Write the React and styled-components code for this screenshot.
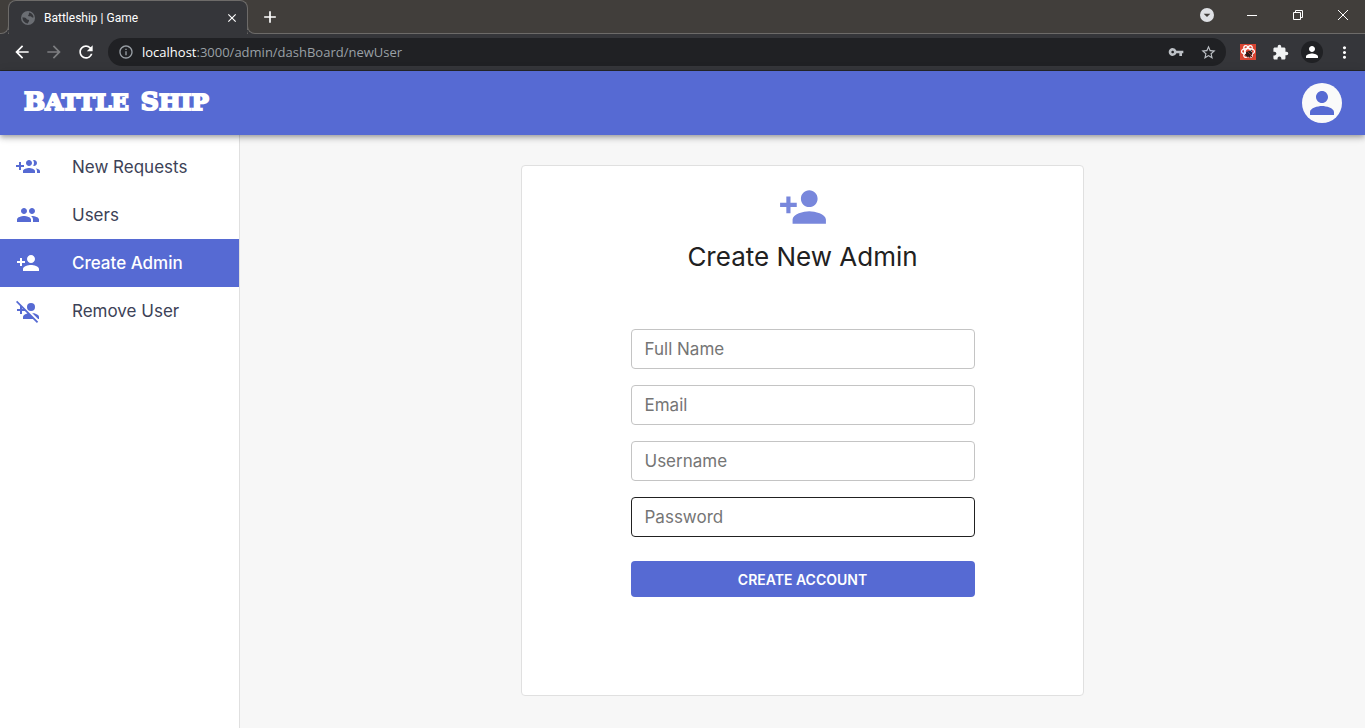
import React from "react";
import styled, { createGlobalStyle, css } from "styled-components";
import {
  MdPeople,
  MdPersonAdd,
  MdPersonAddDisabled,
  MdArrowBack,
  MdArrowForward,
  MdRefresh,
  MdInfoOutline,
  MdVpnKey,
  MdStarBorder,
  MdExtension,
  MdPerson,
  MdMoreVert,
  MdClose,
  MdAdd,
  MdArrowDropDown,
} from "react-icons/md";

const primary = "#566ad3";
const appFont = 'Inter, "Liberation Sans", sans-serif';
const chromeFont = '"Open Sans", "Noto Sans", sans-serif';

const GlobalStyle = createGlobalStyle`
  *, *::before, *::after { box-sizing: border-box; }
  body { margin: 0; background: #f7f7f7; font-family: ${appFont}; }
  svg { display: block; flex: none; }
`;

const Page = styled.div`
  min-height: 100vh;
  display: flex;
  flex-direction: column;
`;

const TitleBar = styled.div`
  height: 34px;
  display: flex;
  align-items: stretch;
  padding-left: 8px;
  background: #413e3b;
  box-shadow: inset 0 -1px #6d6b69;
`;

const Tab = styled.div`
  position: relative;
  width: 240px;
  display: flex;
  align-items: center;
  gap: 8px;
  padding: 0 7px 0 11px;
  background: #35363a;
  border: 1px solid #6d6b69;
  border-bottom: 0;
  border-radius: 8px 8px 0 0;
  color: #fff;
  font: 12px Roboto, sans-serif;

  &::before,
  &::after {
    content: "";
    position: absolute;
    bottom: 0;
    width: 8px;
    height: 8px;
    border: 1px solid #6d6b69;
    border-top: 0;
    background: #413e3b;
    box-shadow: 0 4px #35363a;
    clip-path: inset(0);
  }
  &::before {
    left: -8px;
    border-left: 0;
    border-radius: 0 0 8px 0;
  }
  &::after {
    right: -8px;
    border-right: 0;
    border-radius: 0 0 0 8px;
  }
`;

const TabTitle = styled.span`
  flex: 1;
`;

const PlainButton = styled.button`
  display: flex;
  align-items: center;
  justify-content: center;
  padding: 0;
  border: 0;
  background: none;
  color: ${(p) => p.$color || "#fff"};
  width: ${(p) => p.$width || 32}px;
  cursor: pointer;
`;

const WindowControls = styled.div`
  display: flex;
  height: 29px;
  margin-left: auto;
`;

const SearchTabs = styled.span`
  display: flex;
  align-items: center;
  justify-content: center;
  width: 14px;
  height: 14px;
  border-radius: 50%;
  background: #dfe1e5;
  color: #413e3b;
`;

const Toolbar = styled.div`
  height: 37px;
  display: flex;
  align-items: center;
  padding: 0 5px 0 6px;
  background: #35363a;
  border-bottom: 1px solid #26272a;
`;

const AddressBar = styled.div`
  flex: 1;
  height: 28px;
  display: flex;
  align-items: center;
  margin: 0 6px;
  padding: 0 2px 0 10px;
  border-radius: 14px;
  background: #202124;
  color: #9aa0a6;
`;

const Url = styled.div`
  flex: 1;
  padding-left: 8px;
  font: 13px ${chromeFont};
  strong {
    color: #fff;
    font-weight: 400;
  }
`;

const ProfileDot = styled.span`
  display: flex;
  align-items: center;
  justify-content: center;
  width: 22px;
  height: 22px;
  border-radius: 50%;
  background: #202124;
`;

const Header = styled.header`
  position: relative;
  height: 64px;
  display: flex;
  align-items: center;
  justify-content: space-between;
  padding: 0 23px 0 24px;
  background: ${primary};
  box-shadow: 0 2px 4px -1px rgba(0, 0, 0, 0.2), 0 4px 5px rgba(0, 0, 0, 0.14),
    0 1px 10px rgba(0, 0, 0, 0.12);
`;

const Logo = styled.a`
  display: flex;
  gap: 12px;
  font: bold 23px "DejaVu Serif", serif;
  line-height: 28px;
  padding-bottom: 2px;
  text-transform: uppercase;
  -webkit-text-stroke: 2px #fff;
  color: #fff;
  text-decoration: none;
`;

const LogoWord = styled.span`
  display: block;
  &::first-letter {
    font-size: 25px;
  }
`;

const Avatar = styled.button`
  width: 40px;
  height: 40px;
  display: flex;
  align-items: center;
  justify-content: center;
  padding: 0;
  border: 0;
  border-radius: 50%;
  background: #fafafa;
  color: ${primary};
  cursor: pointer;
`;

const Body = styled.div`
  flex: 1;
  display: flex;
`;

const Sidebar = styled.nav`
  flex: 0 0 240px;
  padding-top: 8px;
  background: #fff;
  border-right: 1px solid #e0e0e0;
`;

const NavItem = styled.a`
  display: flex;
  align-items: center;
  gap: 32px;
  height: 48px;
  padding: 0 16px;
  color: #3c4257;
  font-size: 17px;
  text-decoration: none;
  svg {
    color: ${primary};
  }
  ${(p) =>
    p.$active &&
    css`
      background: ${primary};
      color: #fff;
      font-weight: 500;
      svg {
        color: #fff;
      }
    `}
`;

const Main = styled.main`
  flex: 1;
  padding: 30px 0 32px;
`;

const Card = styled.section`
  width: 50%;
  margin: 0 auto;
  padding: 16px 24px 98px;
  display: flex;
  flex-direction: column;
  align-items: center;
  background: #fff;
  border: 1px solid #e0e0e0;
  border-radius: 4px;
`;

const CardIcon = styled(MdPersonAdd)`
  color: #7887dc;
`;

const Heading = styled.h1`
  margin: 8px 0 56px;
  color: #212121;
  font-size: 26px;
  font-weight: 400;
  line-height: 33px;
`;

const Form = styled.form`
  width: 100%;
  max-width: 344px;
  display: flex;
  flex-direction: column;
  gap: 16px;
`;

const Field = styled.input`
  width: 100%;
  height: 40px;
  padding: 0 13px;
  border: 1px solid ${(p) => (p.$hovered ? "#212121" : "#c4c4c4")};
  border-radius: 4px;
  background: #fff;
  color: #212121;
  font: 17px ${appFont};
  &::placeholder {
    color: #757575;
    opacity: 1;
  }
`;

const Submit = styled.button`
  height: 36px;
  margin-top: 8px;
  border: 0;
  border-radius: 4px;
  background: ${primary};
  color: #fff;
  font: 600 14px ${appFont};
  text-transform: uppercase;
  cursor: pointer;
`;

const RestoreIcon = () => (
  <svg width="12" height="12" viewBox="0 0 12 12" fill="none" stroke="#fff">
    <path d="M1.5 3.5h7v7h-7zM3.5 3.5v-2h7v7h-2" />
  </svg>
);

const MinimizeIcon = () => (
  <svg width="10" height="10" viewBox="0 0 10 10" stroke="#fff">
    <path d="M0 5.5h10" />
  </svg>
);

const CloseIcon = () => (
  <svg width="12" height="12" viewBox="0 0 12 12" stroke="#fff">
    <path d="M1 1l10 10M11 1L1 11" />
  </svg>
);

const GlobeIcon = () => (
  <svg width="16" height="16" viewBox="0 0 16 16">
    <circle cx="8" cy="8" r="7" fill="#6b6e73" />
    <path
      fill="#35363a"
      d="M9 2.5c2.4.4 4.300 2.200 4.600 4.800-.8.5-1.500.2-2-.4-.6-.7-1.800-.3-2.800-.6-.9-.3-.8-1.200-.2-1.600.7-.4.2-1.200.4-2.200zM2.500 7.300c1.200.3 2.500.2 3.400.8.800.6.500 1.300 1.400 1.500 1 .2 1.900.3 1.800 1.200-.1 1-.9 1.100-1.200 2.700-3-.1-5.600-2.800-5.400-6.200z"
    />
  </svg>
);

const GroupAddIcon = ({ size }) => (
  <svg width={size} height={size} viewBox="0 0 24 24" fill="currentColor">
    <path d="M8 10H5V7H3v3H0v2h3v3h2v-3h3v-2zm10 1c1.66 0 2.99-1.34 2.99-3S19.66 5 18 5c-.32 0-.63.05-.91.14.57.81.9 1.79.9 2.86s-.34 2.04-.9 2.86c.28.09.59.14.91.14zm-5 0c1.66 0 2.99-1.34 2.99-3S14.66 5 13 5c-1.66 0-3 1.34-3 3s1.34 3 3 3zm6.620 2.160c.83.73 1.380 1.660 1.380 2.840v2h3v-2c0-1.540-2.370-2.490-4.380-2.840zM13 13c-2 0-6 1-6 3v2h12v-2c0-2-4-3-6-3z" />
  </svg>
);

const DevToolsIcon = () => (
  <svg width="16" height="16" viewBox="0 0 16 16">
    <path fill="#d94532" d="M0 0h16v16H0z" />
    <g fill="none" stroke="#fff" strokeWidth="1.2">
      <ellipse cx="8" cy="7.500" rx="6.500" ry="2.800" />
      <ellipse cx="8" cy="7.500" rx="6.500" ry="2.800" transform="rotate(60 8 7.500)" />
      <ellipse cx="8" cy="7.500" rx="6.500" ry="2.800" transform="rotate(120 8 7.500)" />
    </g>
    <ellipse cx="9" cy="10" rx="3.600" ry="2.400" fill="#2b1a18" transform="rotate(-35 9 10)" />
    <path d="M6 8l6 5M5 11l7-5M8 7l2 7" stroke="#2b1a18" />
    <path d="M8 8l3 3" stroke="#d94532" strokeWidth="0.6" />
  </svg>
);

const navItems = [
  { label: "New Requests", Icon: GroupAddIcon },
  { label: "Users", Icon: MdPeople },
  { label: "Create Admin", Icon: MdPersonAdd, active: true },
  { label: "Remove User", Icon: MdPersonAddDisabled },
];

const fields = [
  { label: "Full Name", type: "text" },
  { label: "Email", type: "email" },
  { label: "Username", type: "text" },
  { label: "Password", type: "password", hovered: true },
];

export default function App() {
  return (
    <Page>
      <GlobalStyle />
      <TitleBar>
        <Tab>
          <GlobeIcon />
          <TabTitle>Battleship | Game</TabTitle>
          <PlainButton $width={16} aria-label="Close tab">
            <MdClose size={14} />
          </PlainButton>
        </Tab>
        <PlainButton $width={44} aria-label="New tab">
          <MdAdd size={20} />
        </PlainButton>
        <WindowControls>
          <PlainButton $width={44} aria-label="Search tabs">
            <SearchTabs>
              <MdArrowDropDown size={16} />
            </SearchTabs>
          </PlainButton>
          <PlainButton $width={46} aria-label="Minimize">
            <MinimizeIcon />
          </PlainButton>
          <PlainButton $width={46} aria-label="Restore">
            <RestoreIcon />
          </PlainButton>
          <PlainButton $width={44} aria-label="Close window">
            <CloseIcon />
          </PlainButton>
        </WindowControls>
      </TitleBar>
      <Toolbar>
        <PlainButton aria-label="Back">
          <MdArrowBack size={20} />
        </PlainButton>
        <PlainButton $color="#7d7e81" aria-label="Forward">
          <MdArrowForward size={20} />
        </PlainButton>
        <PlainButton aria-label="Reload">
          <MdRefresh size={20} />
        </PlainButton>
        <AddressBar>
          <MdInfoOutline size={16} />
          <Url role="textbox" aria-label="Address">
            <strong>localhost</strong>:3000/admin/dashBoard/newUser
          </Url>
          <PlainButton $color="#bdc1c6" aria-label="Passwords">
            <MdVpnKey size={16} />
          </PlainButton>
          <PlainButton $color="#bdc1c6" aria-label="Bookmark">
            <MdStarBorder size={17} />
          </PlainButton>
        </AddressBar>
        <PlainButton aria-label="React Developer Tools">
          <DevToolsIcon />
        </PlainButton>
        <PlainButton $color="#f1f3f4" aria-label="Extensions">
          <MdExtension size={17} />
        </PlainButton>
        <PlainButton aria-label="Profile">
          <ProfileDot>
            <MdPerson size={18} />
          </ProfileDot>
        </PlainButton>
        <PlainButton aria-label="Menu">
          <MdMoreVert size={19} />
        </PlainButton>
      </Toolbar>
      <Header>
        <Logo href="#">
          <LogoWord>Battle</LogoWord>
          <LogoWord>Ship</LogoWord>
        </Logo>
        <Avatar aria-label="Account">
          <MdPerson size={36} />
        </Avatar>
      </Header>
      <Body>
        <Sidebar>
          {navItems.map(({ label, Icon, active }) => (
            <NavItem key={label} href="#" $active={active}>
              <Icon size={24} />
              {label}
            </NavItem>
          ))}
        </Sidebar>
        <Main>
          <Card>
            <CardIcon size={50} />
            <Heading>Create New Admin</Heading>
            <Form>
              {fields.map(({ label, type, hovered }) => (
                <Field
                  key={label}
                  type={type}
                  placeholder={label}
                  aria-label={label}
                  $hovered={hovered}
                />
              ))}
              <Submit type="button">Create Account</Submit>
            </Form>
          </Card>
        </Main>
      </Body>
    </Page>
  );
}
